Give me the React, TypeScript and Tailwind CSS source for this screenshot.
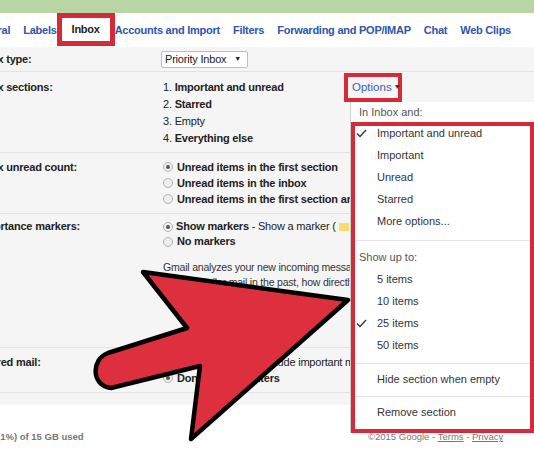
import React from "react";

const RED = "border-[#d42a3a]";

function Radio({ on }: { on?: boolean }) {
  return (
    <span className="flex h-[10px] w-[10px] shrink-0 items-center justify-center rounded-full border border-[#b3b3b3] bg-[#efefef]">
      {on && <span className="h-[4px] w-[4px] rounded-full bg-[#555]" />}
    </span>
  );
}

function Check() {
  return (
    <svg width="11" height="9" viewBox="0 0 11 9" className="shrink-0">
      <polyline points="1,4.5 4,7.5 10,1" fill="none" stroke="#333" strokeWidth="1.3" />
    </svg>
  );
}

function Row({
  label,
  className,
  children,
}: {
  label: string;
  className: string;
  children?: React.ReactNode;
}) {
  return (
    <div className={`flex border-b border-[#e2e2e2] ${className}`}>
      <div className="w-[163px] shrink-0 whitespace-nowrap font-bold">
        <span className="-ml-[25px] inline-block">{label}</span>
      </div>
      <div className="flex flex-col whitespace-nowrap">{children}</div>
    </div>
  );
}

function MenuItem({ text, checked }: { text: string; checked?: boolean }) {
  return (
    <div className="flex h-[22px] items-center">
      <div className="flex w-[22px] justify-start pl-[1px]">{checked && <Check />}</div>
      <span>{text}</span>
    </div>
  );
}

export default function App() {
  return (
    <div className="relative h-[462px] w-[534px] overflow-hidden bg-white font-['Liberation_Sans',Arial,sans-serif] text-[11px] text-[#222]">
      <div className="h-[13px] bg-[#b9d4a5]" />

      {/* settings tabs */}
      <nav className="-ml-[29px] flex h-[34px] items-start gap-[13px] whitespace-nowrap text-[11px] font-bold tracking-[-0.25px] text-[#2d54b0]">
        <span className="mt-[9px]">General</span>
        <span className="mt-[9px]">Labels</span>
        <span className={`-mx-[13px] flex h-[33px] items-center border-[5px] ${RED} px-[10px] text-[#222]`}>
          Inbox
        </span>
        <span className="mt-[9px]">Accounts and Import</span>
        <span className="mt-[9px]">Filters</span>
        <span className="mt-[9px]">Forwarding and POP/IMAP</span>
        <span className="mt-[9px]">Chat</span>
        <span className="mt-[9px]">Web Clips</span>
      </nav>

      <div className="bg-[#f5f5f5] pb-[12px] tracking-[-0.2px]">
        <Row label="Inbox type:" className="h-[25px] items-center">
          <div className="-ml-[2px] flex h-[17px] w-[87px] items-center justify-between rounded-[2px] border border-[#bdbdbd] bg-white pl-[3px] pr-[6px] font-normal">
            <span>Priority Inbox</span>
            <span className="text-[7px]">▼</span>
          </div>
        </Row>

        <Row label="Inbox sections:" className="h-[81px] pt-[7px] leading-[17px]">
          <div>1. <span className="font-bold">Important and unread</span></div>
          <div>2. <span className="font-bold">Starred</span></div>
          <div>3. <span>Empty</span></div>
          <div>4. <span className="font-bold">Everything else</span></div>
        </Row>

        <Row label="Inbox unread count:" className="h-[61px] pt-[6px] leading-[16px]">
          <div className="flex items-center gap-[4px] font-bold">
            <Radio on /> Unread items in the first section
          </div>
          <div className="flex items-center gap-[4px] font-bold">
            <Radio /> Unread items in the inbox
          </div>
          <div className="flex items-center gap-[4px] font-bold">
            <Radio /> Unread items in the first section and the inbox
          </div>
        </Row>

        <Row label="Importance markers:" className="h-[134px] pt-[5px] leading-[15px]">
          <div className="flex items-center gap-[3px]">
            <Radio on />
            <span>
              <span className="font-bold">Show markers</span> - Show a marker (
            </span>
            <span className="h-[8px] w-[10px] bg-[#f6dc6a]" />
            <span>) by messages marked as important.</span>
          </div>
          <div className="flex items-center gap-[4px] font-bold">
            <Radio /> No markers
          </div>
          <div className="mt-[11px] text-[10.5px] text-[#333]">
            <div>Gmail analyzes your new incoming messages to predict what's important,</div>
            <div>treated similar mail in the past, how directly the message is addressed to you,</div>
          </div>
        </Row>

        <Row label="Filtered mail:" className="h-[45px] pt-[6px] leading-[16px]">
          <div className="flex items-center gap-[4px]">
            <Radio />
            <span>
              <span className="font-bold">Override filters</span> - Include important messages in the inbox
            </span>
          </div>
          <div className="flex items-center gap-[4px] font-bold">
            <Radio on /> Don't override filters
          </div>
        </Row>
      </div>

      <div className="flex items-center pt-[25px] text-[9.5px] text-[#777]">
        <div className="w-[368px] shrink-0 whitespace-nowrap font-bold">
          <span className="-ml-[41px] inline-block">0.14 GB (1%) of 15 GB used</span>
        </div>
        <div className="whitespace-nowrap">
          ©2015 Google - <span className="underline">Terms</span> - <span className="underline">Privacy</span>
        </div>
      </div>

      {/* options menu */}
      <div className="absolute left-[344px] top-[73px] w-[190px]">
        <div className={`flex h-[29px] w-[58px] items-center border-[4px] ${RED} pl-[4px] text-[11.5px] text-[#3a5fb8]`}>
          Options<span className="ml-[2px] text-[7px] text-[#333]">▼</span>
        </div>
        <div className="ml-[6px] w-[184px] border-l border-[#cfcfcf] bg-white text-[11px] text-[#333]">
          <div className="flex h-[20px] items-center pl-[8px] text-[#555]">In Inbox and:</div>
          <div className={`w-[183px] border-[4px] ${RED} bg-white pb-[6px]`}>
            <div className="-mt-[4px]">
              <MenuItem text="Important and unread" checked />
              <MenuItem text="Important" />
              <MenuItem text="Unread" />
              <MenuItem text="Starred" />
              <MenuItem text="More options..." />
            </div>
            <div className="mt-[8px] h-px bg-[#e3e3e3]" />
            <div className="mt-[5px] flex h-[22px] items-center pl-[4px] text-[#555]">Show up to:</div>
            <MenuItem text="5 items" />
            <MenuItem text="10 items" />
            <MenuItem text="25 items" checked />
            <MenuItem text="50 items" />
            <div className="mt-[7px] h-px bg-[#e3e3e3]" />
            <div className="mt-[4px]">
              <MenuItem text="Hide section when empty" />
            </div>
            <div className="mt-[6px] h-px bg-[#e3e3e3]" />
            <div className="mt-[4px]">
              <MenuItem text="Remove section" />
            </div>
          </div>
        </div>
      </div>

      {/* big arrow pointing at the menu */}
      <svg className="pointer-events-none absolute left-0 top-0" width="534" height="462" viewBox="0 0 534 462">
        <path
          d="M348 300 L143 272 L187 328 L108 353 C91 359 91 386 111 388 L200 366 L191 439 Z"
          fill="#dd2f3e"
          stroke="#000"
          strokeWidth="4.5"
          strokeLinejoin="round"
        />
      </svg>
    </div>
  );
}
